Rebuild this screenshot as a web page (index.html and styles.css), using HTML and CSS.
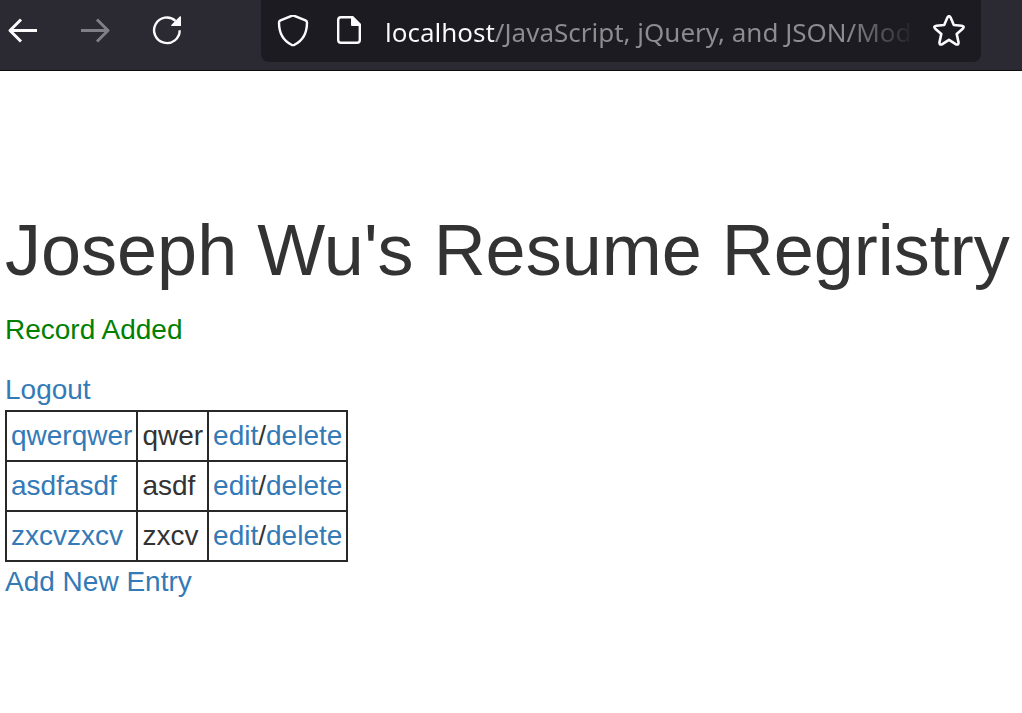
FILE: index.html
```html
<!DOCTYPE html>
<html lang="en">
<head>
<meta charset="utf-8">
<title>Joseph Wu's Resume Registry</title>
<link rel="stylesheet" href="styles.css">
</head>
<body>
<header class="toolbar">
  <nav class="nav-buttons" aria-label="Browser">
    <button class="icon-button" type="button" aria-label="Back">
      <svg class="icon" viewBox="0 0 32 32"><path d="M31 16.500H4M15 5.500L4 16.500l11 11" fill="none" stroke="currentColor" stroke-width="3" stroke-linejoin="round"/></svg>
    </button>
    <button class="icon-button" type="button" aria-label="Forward" disabled>
      <svg class="icon" viewBox="0 0 32 32"><path d="M3 16.500h27M19 5.500l11 11-11 11" fill="none" stroke="currentColor" stroke-width="3" stroke-linejoin="round"/></svg>
    </button>
    <button class="icon-button" type="button" aria-label="Reload">
      <svg class="icon" viewBox="0 0 32 32"><path d="M29.700 16.200A12.800 12.800 0 1 1 25.500 6.800" fill="none" stroke="currentColor" stroke-width="2.400"/><path d="M31 2.500V12H21.500q-.8-.5 0-1.300l8.200-8.200q.8-.7 1.300 0z" fill="currentColor"/></svg>
    </button>
  </nav>
  <div class="address-bar">
    <button class="icon-button" type="button" aria-label="Tracking protection">
      <svg class="icon" viewBox="0 0 32 32"><path d="M16 .3L28.500 5.300Q30 6 30 7.500C30 18 25 26 17.500 29.800Q16 30.500 14.500 29.800C7 26 2 18 2 7.500Q2 6 3.500 5.300z" fill="none" stroke="currentColor" stroke-width="2.400" stroke-linejoin="round"/></svg>
    </button>
    <button class="icon-button" type="button" aria-label="Site information">
      <svg class="icon" viewBox="0 0 32 32"><path d="M19 2.200H8Q5.200 2.200 5.200 5V25Q5.200 27.800 8 27.800H24Q26.800 27.800 26.800 25V10z" fill="none" stroke="currentColor" stroke-width="2.400" stroke-linejoin="round"/><path d="M18 1h2l8 8v2h-9q-1 0-1-1z" fill="currentColor"/></svg>
    </button>
    <input class="url" type="text" aria-label="Address" spellcheck="false" value="localhost/JavaScript, jQuery, and JSON/Mod">
    <button class="icon-button" type="button" aria-label="Bookmark this page">
      <svg class="icon" viewBox="0 0 32 32"><path d="M14.300 2.700Q16 -.4 17.700 2.700L20.800 10 28.700 10.700Q32 11.300 29.700 13.700L23.700 18.900 25.500 27.200Q25.800 30.500 22.700 29.200L16 24.800 9.300 29.200Q6.200 30.500 6.500 27.200L8.300 18.900 2.300 13.700Q0 11.300 3.300 10.700L11.200 10z" fill="none" stroke="currentColor" stroke-width="2.600" stroke-linejoin="round"/></svg>
    </button>
  </div>
</header>
<main class="page">
  <h1 class="title">Joseph Wu's Resume Regristry</h1>
  <p class="flash">Record Added</p>
  <a href="#logout">Logout</a>
  <table class="profiles">
    <tbody>
      <tr><td><a href="#view-1">qwerqwer</a></td><td>qwer</td><td><a href="#edit-1">edit</a>/<a href="#delete-1">delete</a></td></tr>
      <tr><td><a href="#view-2">asdfasdf</a></td><td>asdf</td><td><a href="#edit-2">edit</a>/<a href="#delete-2">delete</a></td></tr>
      <tr><td><a href="#view-3">zxcvzxcv</a></td><td>zxcv</td><td><a href="#edit-3">edit</a>/<a href="#delete-3">delete</a></td></tr>
    </tbody>
  </table>
  <a href="#add">Add New Entry</a>
</main>
</body>
</html>
```
FILE: styles.css
```css
* {
  box-sizing: border-box;
}

body {
  margin: 0;
  background: #fff;
  color: #333;
  font-family: "Liberation Sans", Arial, sans-serif;
  font-size: 28px;
  line-height: 40px;
}

a {
  color: #337ab7;
  text-decoration: none;
}

.toolbar {
  display: flex;
  gap: 79px;
  padding: 0 41px 8px 6px;
  background: #2b2a33;
  border-bottom: 1px solid #0c0c0d;
}

.nav-buttons {
  display: flex;
  align-items: center;
  gap: 40px;
}

.icon-button {
  display: flex;
  flex: none;
  padding: 0;
  border: 0;
  background: none;
  color: #fbfbfe;
}

.icon-button:disabled {
  color: #807f87;
}

.icon {
  width: 32px;
  height: 32px;
}

.nav-buttons .icon {
  margin-top: -2px;
}

.address-bar {
  display: flex;
  flex: 1;
  align-items: center;
  gap: 24px;
  min-width: 0;
  height: 62px;
  padding: 0 16px;
  border-radius: 0 0 8px 8px;
  background: #1c1b22;
}

.url {
  flex: 1;
  min-width: 0;
  height: 40px;
  margin: 0 -14px 0 -4px;
  padding: 2px 0 0;
  border: 0;
  outline: 0;
  background: linear-gradient(to right, #fbfbfe 110px, #8d8d91 110px, #8d8d91 calc(100% - 76px), #1c1b22 calc(100% - 8px));
  background-clip: text;
  -webkit-background-clip: text;
  color: transparent;
  font-family: "Noto Sans", "Open Sans", sans-serif;
  font-size: 26px;
}

.page {
  padding: 100px 5px 40px;
}

.title {
  margin: 40px 0 20px;
  font-size: 72px;
  font-weight: 400;
  line-height: 79px;
}

.flash {
  margin: 0 0 20px;
  color: #008000;
}

.profiles {
  border: 2px solid #282828;
  border-collapse: collapse;
}

.profiles td {
  padding: 4px;
  border: 2px solid #282828;
}
```
